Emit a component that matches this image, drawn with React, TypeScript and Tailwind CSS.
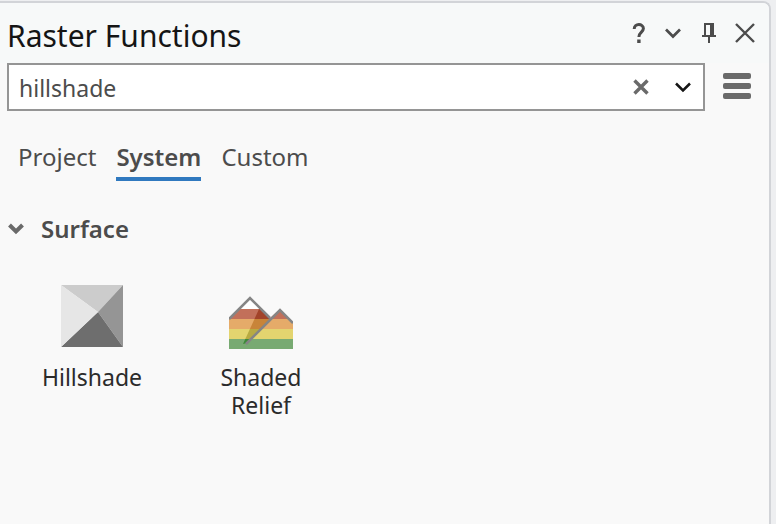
import { useState } from "react";

function ShadedReliefIcon() {
  return (
    <svg width="64" height="64" viewBox="0 0 64 64" aria-hidden="true">
      <defs>
        <clipPath id="relief-outline">
          <path d="M0 34 21 13 41 33 51 24 64 38V64H0Z" />
        </clipPath>
        <clipPath id="relief-shadow">
          <path d="M30.5 23 41 34 18 58 14 59Z" />
        </clipPath>
      </defs>
      <g clipPath="url(#relief-outline)">
        <path d="M0 12H64V24H0Z" fill="#ffffff" />
        <path d="M0 24H64V34H0ZM44 22H60V24H44Z" fill="#c2705a" />
        <path d="M0 34H64V44H0Z" fill="#e5ab69" />
        <path d="M0 44H64V54H0Z" fill="#e3d46f" />
        <path d="M0 54H64V64H0Z" fill="#78aa72" />
      </g>
      <g clipPath="url(#relief-shadow)">
        <path d="M0 24H64V34H0Z" fill="#a24329" />
        <path d="M0 34H64V44H0Z" fill="#c88439" />
        <path d="M0 44H64V54H0Z" fill="#b8aa42" />
        <path d="M0 54H64V64H0Z" fill="#3d8a38" />
      </g>
      <path d="M0 34 21 13 41 33M17 59 51 25 64 38" fill="none" stroke="#858585" strokeWidth="2.6" />
    </svg>
  );
}

function HillshadeIcon() {
  return (
    <svg width="62" height="62" viewBox="0 0 62 62" aria-hidden="true">
      <path d="M0 0H62L37 27Z" fill="#cccccc" />
      <path d="M62 0V62L37 27Z" fill="#959595" />
      <path d="M0 62H62L37 27Z" fill="#6e6e6e" />
      <path d="M0 0V62L37 27Z" fill="#e6e6e6" />
    </svg>
  );
}

const tabs = ["Project", "System", "Custom"];

export default function App() {
  const [query, setQuery] = useState("hillshade");
  const [active, setActive] = useState("System");

  return (
    <div className="min-h-screen bg-[#eeeff1] pt-px pr-[5px] font-['Noto_Sans',sans-serif] text-[#4c4c4c]">
      <section className="min-h-[calc(100vh-1px)] overflow-hidden rounded-tr-lg border-t-2 border-r-2 border-[#d2d4d8] bg-[#f9f9f9]">
        <header className="flex h-15 items-center bg-[#f7f9f9] pr-1.5 pl-[7px]">
          <h1 className="mt-1.5 flex-1 text-[30px] leading-10 text-[#151515]">Raster Functions</h1>
          <div className="flex items-center text-[#4c4c4c]">
            <button aria-label="Help" className="flex h-8 w-8 items-center justify-center">
              <svg width="14" height="22" viewBox="0 0 14 22" aria-hidden="true">
                <path d="M2.2 7C2.2 1.2 11.4 1.2 11.4 6.6C11.4 10.2 6.9 10.2 6.9 15" fill="none" stroke="currentColor" strokeWidth="3" />
                <path d="M5.2 17.5H8.6V21H5.2Z" fill="currentColor" />
              </svg>
            </button>
            <button aria-label="Panel options" className="flex h-8 w-9 items-center justify-center">
              <svg width="16" height="12" viewBox="0 0 16 12" aria-hidden="true">
                <path d="M1 2.5 8 9.5 15 2.5" fill="none" stroke="currentColor" strokeWidth="2.7" />
              </svg>
            </button>
            <button aria-label="Auto hide" className="flex h-8 w-9 items-center justify-center">
              <svg width="14" height="20" viewBox="0 0 14 20" aria-hidden="true">
                <path fillRule="evenodd" d="M2 0H12V12H14V14H8V20H6V14H0V12H2ZM4 2V12H8V2Z" fill="currentColor" />
              </svg>
            </button>
            <button aria-label="Close" className="flex h-8 w-9 items-center justify-center">
              <svg width="20" height="20" viewBox="0 0 20 20" aria-hidden="true">
                <path d="M1 1 19 19M19 1 1 19" fill="none" stroke="currentColor" strokeWidth="2.4" />
              </svg>
            </button>
          </div>
        </header>

        <div className="flex items-center gap-3 pr-[12px] pl-[7px]">
          <div className="flex h-12 min-w-0 flex-1 items-center border-2 border-[#959595] bg-white">
            <input
              type="text"
              aria-label="Search raster functions"
              value={query}
              onChange={(e) => setQuery(e.target.value)}
              className="h-full min-w-0 flex-1 bg-transparent pt-0.5 pl-2.5 text-[23px] outline-none"
            />
            <button aria-label="Clear search" onClick={() => setQuery("")} className="flex h-full w-11 items-center justify-center text-[#6a6a6a]">
              <svg width="16" height="16" viewBox="0 0 16 16" aria-hidden="true">
                <path d="M1.5 1.5 14.5 14.5M14.5 1.5 1.5 14.5" fill="none" stroke="currentColor" strokeWidth="3.4" />
              </svg>
            </button>
            <button aria-label="Search history" className="flex h-full w-10 items-center justify-center text-[#151515]">
              <svg width="16" height="12" viewBox="0 0 16 12" aria-hidden="true">
                <path d="M1 2.5 8 9.5 15 2.5" fill="none" stroke="currentColor" strokeWidth="2.5" />
              </svg>
            </button>
          </div>
          <button aria-label="Menu" className="flex h-12 w-10 items-center justify-center pb-0.5 text-[#6a6a6a]">
            <svg width="28" height="26" viewBox="0 0 28 26" aria-hidden="true">
              <rect width="28" height="6" rx="2" fill="currentColor" />
              <rect y="10" width="28" height="6" rx="2" fill="currentColor" />
              <rect y="20" width="28" height="6" rx="2" fill="currentColor" />
            </svg>
          </button>
        </div>

        <nav role="tablist" aria-label="Function source" className="flex gap-5 px-[18px] pt-7">
          {tabs.map((tab) => (
            <button
              key={tab}
              role="tab"
              aria-selected={tab === active}
              onClick={() => setActive(tab)}
              className={
                tab === active
                  ? "h-[42px] border-b-4 border-[#3079bf] pb-0.5 text-2xl font-semibold"
                  : "h-[42px] border-b-4 border-transparent pb-0.5 text-2xl"
              }
            >
              {tab}
            </button>
          ))}
        </nav>

        <button aria-expanded="true" className="mt-8 flex h-8 items-center gap-[17px] pl-2">
          <svg width="16" height="12" viewBox="0 0 16 12" aria-hidden="true">
            <path d="M1.5 2 8 8.5 14.5 2" fill="none" stroke="#6a6a6a" strokeWidth="4" />
          </svg>
          <span className="text-2xl font-semibold">Surface</span>
        </button>

        <div className="mt-10 flex items-start gap-[41px] pl-7 text-[23px] leading-7 text-[#2b2b2b]">
          <button className="flex w-32 flex-col items-center gap-4">
            <HillshadeIcon />
            <span>Hillshade</span>
          </button>
          <button className="flex w-32 flex-col items-center gap-3.5">
            <ShadedReliefIcon />
            <span className="w-24">Shaded Relief</span>
          </button>
        </div>
      </section>
    </div>
  );
}
